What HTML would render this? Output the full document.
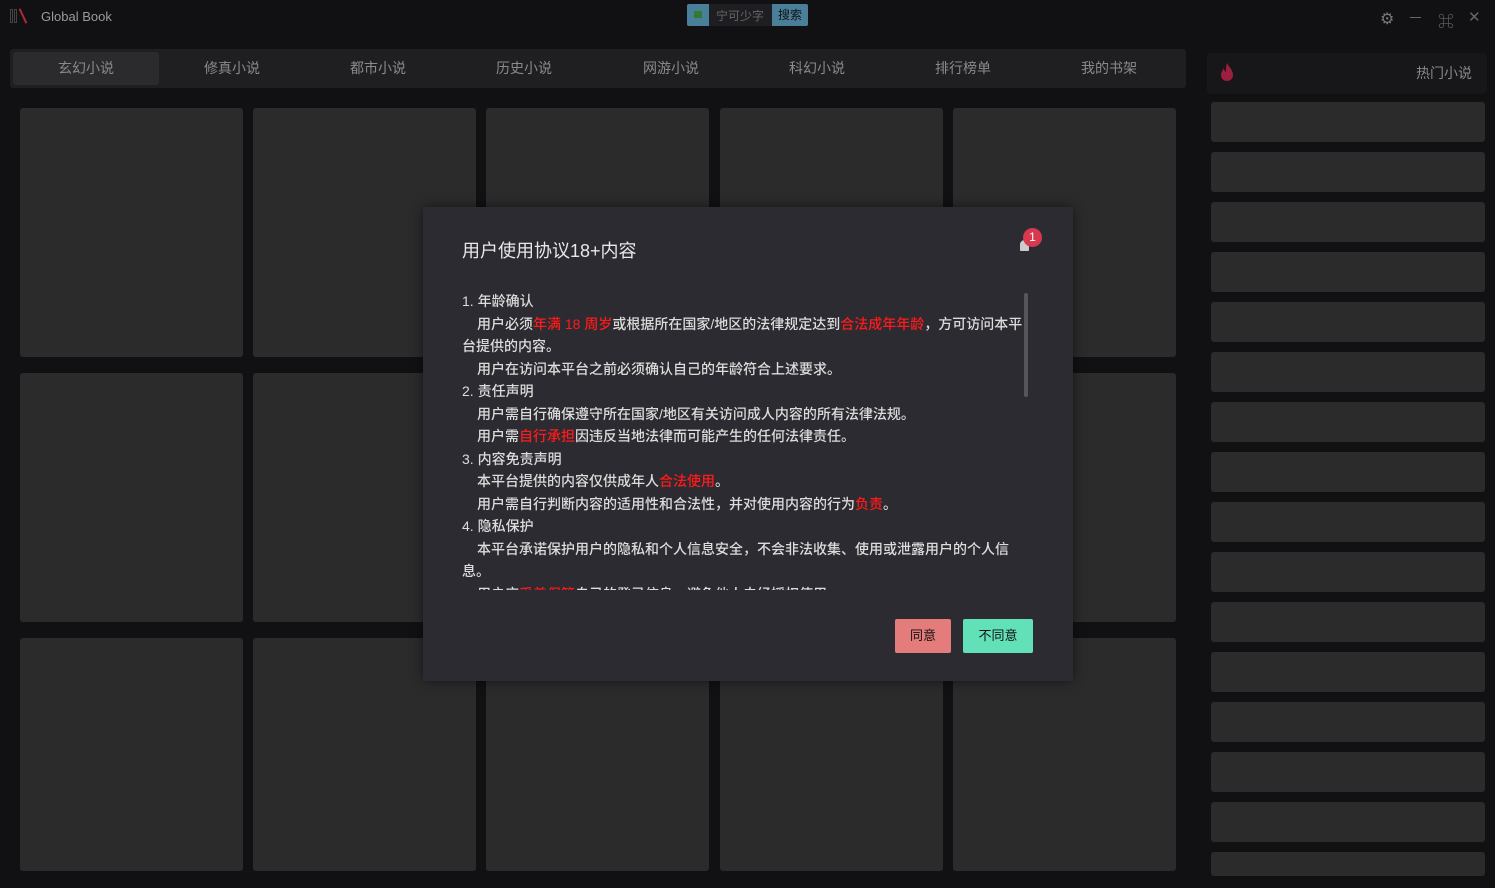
<!DOCTYPE html>
<html><head><meta charset="utf-8"><style>
*{margin:0;padding:0;box-sizing:border-box}
body{width:1495px;height:888px;background:#111113;overflow:hidden;font-family:"Liberation Sans","Noto Sans CJK SC",sans-serif;position:relative;color:#888}
.abs{position:absolute}
.card{position:absolute;background:#2b2b2b;border-radius:3px}
.side{position:absolute;left:1211px;width:274px;height:40px;background:#2b2b2b;border-radius:3px}
.tab{position:absolute;top:52px;height:33px;width:146px;text-align:center;line-height:33px;font-size:14px;color:#8a8a8a}
.modal{position:absolute;left:423px;top:207px;width:650px;height:474px;background:#2c2b31;border-radius:2px;box-shadow:0 0 12px rgba(0,0,0,.5)}
.txt{position:absolute;left:39px;top:83px;width:575px;height:300px;overflow:hidden;font-size:14px;line-height:22.5px;color:#dcdcdc;font-weight:500}
.r{color:#ff1a1a}
.in{padding-left:15px}
</style></head><body>
<div class="abs" style="left:10px;top:9px;width:3px;height:14px;border:1px solid #444"></div>
<div class="abs" style="left:14px;top:9px;width:3px;height:14px;border:1px solid #444"></div>
<div class="abs" style="left:22px;top:8px;width:2px;height:16px;background:#b02a3a;transform:rotate(-25deg)"></div>
<div class="abs" style="left:41px;top:9px;font-size:13px;color:#9a9a9a">Global Book</div>
<div class="abs" style="left:687px;top:4px;width:121px;height:22px;background:#1e1e22;border-radius:2px"></div>
<div class="abs" style="left:687px;top:4px;width:22px;height:22px;background:#4a7f99;border-radius:2px 0 0 2px"></div>
<div class="abs" style="left:694px;top:11px;width:8px;height:7px;background:#2e7d32"></div>
<div class="abs" style="left:716px;top:7px;font-size:12px;color:#666">宁可少字</div>
<div class="abs" style="left:772px;top:4px;width:36px;height:22px;background:#4a7f99;border-radius:0 2px 2px 0;font-size:12px;color:#111;text-align:center;line-height:22px">搜索</div>
<div class="abs" style="left:1380px;top:9px;font-size:16px;color:#777">⚙</div>
<div class="abs" style="left:1410px;top:17px;width:11px;height:1px;background:#666"></div>
<div class="abs" style="left:1438px;top:8px;font-size:16px;color:#666">⌘</div>
<div class="abs" style="left:1468px;top:8px;font-size:15px;color:#666">✕</div>
<div class="abs" style="left:10px;top:49px;width:1176px;height:39px;background:#1f1f22;border-radius:3px"></div>
<div class="abs" style="left:13px;top:52px;width:146px;height:33px;background:#2b2b2e;border-radius:3px"></div>
<div class="tab" style="left:13px">玄幻小说</div><div class="tab" style="left:159px">修真小说</div><div class="tab" style="left:305px">都市小说</div><div class="tab" style="left:451px">历史小说</div><div class="tab" style="left:598px">网游小说</div><div class="tab" style="left:744px">科幻小说</div><div class="tab" style="left:890px">排行榜单</div><div class="tab" style="left:1036px">我的书架</div>
<div class="abs" style="left:1207px;top:53px;width:280px;height:41px;background:#17171a;border-radius:4px"></div>
<svg class="abs" style="left:1220px;top:62px" width="14" height="20" viewBox="0 0 14 20"><path d="M7 1C9 5 13 8 13 13C13 17 10 19 7 19C4 19 1 17 1 13C1 10 3 8 4 6C4 9 6 10 6 10C6 6 6 4 7 1Z" fill="#9c1f3f"/></svg>
<div class="abs" style="left:1416px;top:63px;font-size:14px;color:#888">热门小说</div>
<div class="card" style="left:20px;top:108px;width:223px;height:249px"></div><div class="card" style="left:253px;top:108px;width:223px;height:249px"></div><div class="card" style="left:486px;top:108px;width:223px;height:249px"></div><div class="card" style="left:720px;top:108px;width:223px;height:249px"></div><div class="card" style="left:953px;top:108px;width:223px;height:249px"></div>
<div class="card" style="left:20px;top:373px;width:223px;height:249px"></div><div class="card" style="left:253px;top:373px;width:223px;height:249px"></div><div class="card" style="left:486px;top:373px;width:223px;height:249px"></div><div class="card" style="left:720px;top:373px;width:223px;height:249px"></div><div class="card" style="left:953px;top:373px;width:223px;height:249px"></div>
<div class="card" style="left:20px;top:638px;width:223px;height:233px"></div><div class="card" style="left:253px;top:638px;width:223px;height:233px"></div><div class="card" style="left:486px;top:638px;width:223px;height:233px"></div><div class="card" style="left:720px;top:638px;width:223px;height:233px"></div><div class="card" style="left:953px;top:638px;width:223px;height:233px"></div>
<div class="side" style="top:102px"></div><div class="side" style="top:152px"></div><div class="side" style="top:202px"></div><div class="side" style="top:252px"></div><div class="side" style="top:302px"></div><div class="side" style="top:352px"></div><div class="side" style="top:402px"></div><div class="side" style="top:452px"></div><div class="side" style="top:502px"></div><div class="side" style="top:552px"></div><div class="side" style="top:602px"></div><div class="side" style="top:652px"></div><div class="side" style="top:702px"></div><div class="side" style="top:752px"></div><div class="side" style="top:802px"></div><div class="side" style="top:852px;height:24px"></div>
<div class="modal">
<div class="abs" style="left:39px;top:30px;font-size:18px;color:#e8e8e8">用户使用协议18+内容</div>
<div class="abs" style="left:597px;top:33px;width:9px;height:11px;background:#ccc;border-radius:5px 5px 1px 1px"></div>
<div class="abs" style="left:600px;top:21px;width:19px;height:19px;background:#d8394f;border-radius:50%;color:#fff;font-size:12px;text-align:center;line-height:19px">1</div>
<div class="abs" style="left:601px;top:86px;width:4px;height:104px;background:#55555b;border-radius:2px"></div>
<div class="txt">
<div>1. 年龄确认</div>
<div class="in">用户必须<span class="r">年满 18 周岁</span>或根据所在国家/地区的法律规定达到<span class="r">合法成年年龄</span>，方可访问本平</div>
<div>台提供的内容。</div>
<div class="in">用户在访问本平台之前必须确认自己的年龄符合上述要求。</div>
<div>2. 责任声明</div>
<div class="in">用户需自行确保遵守所在国家/地区有关访问成人内容的所有法律法规。</div>
<div class="in">用户需<span class="r">自行承担</span>因违反当地法律而可能产生的任何法律责任。</div>
<div>3. 内容免责声明</div>
<div class="in">本平台提供的内容仅供成年人<span class="r">合法使用</span>。</div>
<div class="in">用户需自行判断内容的适用性和合法性，并对使用内容的行为<span class="r">负责</span>。</div>
<div>4. 隐私保护</div>
<div class="in">本平台承诺保护用户的隐私和个人信息安全，不会非法收集、使用或泄露用户的个人信</div>
<div>息。</div>
<div class="in">用户应<span class="r">妥善保管</span>自己的登录信息，避免他人未经授权使用。</div>
</div>
<div class="abs" style="left:472px;top:412px;width:56px;height:34px;background:#e57c7c;border-radius:2px;color:#111;font-size:13px;text-align:center;line-height:34px">同意</div>
<div class="abs" style="left:540px;top:412px;width:70px;height:34px;background:#62e0b8;border-radius:2px;color:#111;font-size:13px;text-align:center;line-height:34px">不同意</div>
</div>
</body></html>
